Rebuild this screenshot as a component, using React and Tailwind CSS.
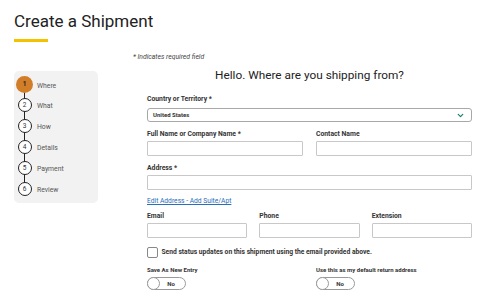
import { ChevronDown } from 'lucide-react';

const STEPS = ['Where', 'What', 'How', 'Details', 'Payment', 'Review'];

const Label = ({ children, className = '' }) => (
  <div className={`text-[6.8px] font-bold text-[#333] leading-[8px] whitespace-nowrap ${className}`}>{children}</div>
);

const Input = ({ className = '' }) => (
  <div className={`h-[15px] border border-[#c8c8c8] bg-white rounded-[1px] ${className}`} />
);

const Toggle = () => (
  <div className="mt-[4px] w-[39px] h-[13px] rounded-full border border-[#9a9a9a] flex items-center bg-white">
    <div className="w-[13px] h-[13px] rounded-full border border-[#9a9a9a] -ml-px bg-white shrink-0" />
    <span className="flex-1 text-center text-[6px] font-bold text-[#333] pr-[3px] leading-none">No</span>
  </div>
);

export default function App() {
  return (
    <div className="w-[480px] h-[298px] bg-white overflow-hidden text-[#333]"
      style={{ fontFamily: 'Roboto, "Liberation Sans", sans-serif' }}>
      {/* Title */}
      <div className="pl-[14px] pt-[9px]">
        <h1 className="text-[17px] leading-[24px] text-[#222]">Create a Shipment</h1>
        <div className="mt-[6px] w-[34px] h-[3px] bg-[#f5c200]" />
      </div>

      <div className="flex pl-[14px] pr-[8px]">
        {/* Steps */}
        <div className="mt-[29px] w-[84px] h-[132px] bg-[#f2f2f2] rounded-[5px] pt-[3.5px] pl-[2px] shrink-0">
          <div className="flex flex-col">
            {STEPS.map((s, i) => (
              <div key={s} className={`flex items-center relative ${i === 0 ? 'h-[20px]' : 'h-[21px]'}`}>
                <div className="w-[17px] flex justify-center relative">
                  {i < STEPS.length - 1 && (
                    <div className="absolute left-[7.75px] top-[10px] h-[21px] w-[1.5px] bg-[#222]" />
                  )}
                  {i === 0 ? (
                    <div className="relative w-[17px] h-[17px] rounded-full bg-[#d27d28] flex items-center justify-center text-[6.5px] font-bold text-[#222] leading-none">1</div>
                  ) : (
                    <div className="relative w-[14px] h-[14px] rounded-full border-[1.5px] border-[#222] bg-white flex items-center justify-center text-[6.5px] text-[#333] leading-none">{i + 1}</div>
                  )}
                </div>
                <span className={`ml-[4px] text-[6.8px] text-[#555] leading-none ${i === 0 ? 'mt-[3px]' : 'mt-[2px]'}`}>{s}</span>
              </div>
            ))}
          </div>
        </div>

        {/* Main */}
        <div className="flex-1 ml-[35px]">
          <div className="mt-[11px] text-[6.8px] italic text-[#444] leading-[8px]">* Indicates required field</div>
          <div className="pl-[14px]">
            <h2 className="mt-[7px] text-center text-[11.8px] leading-[14px] text-[#222]">Hello. Where are you shipping from?</h2>

            <Label className="mt-[13px]">Country or Territory *</Label>
            <div className="mt-[5px] h-[14px] border border-[#a8a8a8] rounded-[3px] flex items-center justify-between pl-[5px] pr-[6px]">
              <span className="text-[6px] font-bold text-[#333] leading-none">United States</span>
              <ChevronDown size={9} strokeWidth={3.2} className="text-[#17806f]" />
            </div>

            <div className="mt-[8px] grid grid-cols-2 gap-x-[13px]">
              <div>
                <Label>Full Name or Company Name *</Label>
                <Input className="mt-[3px]" />
              </div>
              <div>
                <Label>Contact Name</Label>
                <Input className="mt-[3px]" />
              </div>
            </div>

            <Label className="mt-[8px]">Address *</Label>
            <Input className="mt-[3px]" />

            <div className="mt-[7px] text-[6.7px] text-[#2a6ebb] underline leading-[8px]">Edit Address - Add Suite/Apt</div>

            <div className="mt-[7px] grid grid-cols-3 gap-x-[12px]">
              {['Email', 'Phone', 'Extension'].map(l => (
                <div key={l}>
                  <Label>{l}</Label>
                  <Input className="mt-[3px]" />
                </div>
              ))}
            </div>

            <div className="mt-[9px] flex items-center h-[11px]">
              <div className="w-[11px] h-[11px] border border-[#888] rounded-[2px] bg-white shrink-0" />
              <span className="ml-[3.5px] text-[6.7px] font-bold text-[#333] leading-none whitespace-nowrap">Send status updates on this shipment using the email provided above.</span>
            </div>

            <div className="mt-[9px] grid grid-cols-2 gap-x-[13px]">
              <div>
                <div className="text-[6px] font-bold text-[#333] leading-[6px]">Save As New Entry</div>
                <Toggle />
              </div>
              <div>
                <div className="text-[6px] font-bold text-[#333] leading-[6px]">Use this as my default return address</div>
                <Toggle />
              </div>
            </div>
          </div>
        </div>
      </div>
    </div>
  );
}
